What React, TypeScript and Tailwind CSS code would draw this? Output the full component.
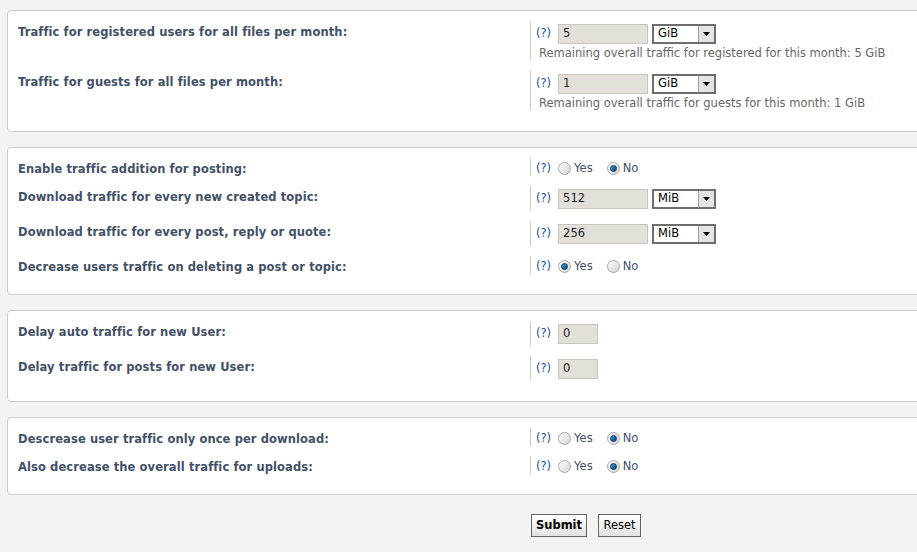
import React from 'react'

const Help = () => <span className="text-[#1b5496] mr-[7px] shrink-0">(?)</span>

const TextBox: React.FC<{ value: string; wide?: boolean }> = ({ value, wide = true }) => (
  <div
    className={`${wide ? 'w-[90px]' : 'w-[40px]'} h-[20px] bg-[#e3e0da] border border-[#c9c6bf] flex items-center pl-[4px] text-[#222]`}
  >
    {value}
  </div>
)

const Select: React.FC<{ value: string }> = ({ value }) => (
  <div className="ml-[4px] w-[64px] h-[20px] border-2 border-[#6e6e6e] bg-white flex items-stretch">
    <span className="flex-1 flex items-center pl-[4px] text-black">{value}</span>
    <span className="w-[16px] bg-[#e4e4e4] border-l border-[#a0a0a0] flex items-center justify-center">
      <svg width="7" height="4" viewBox="0 0 7 4">
        <path d="M0 0h7L3.5 4z" fill="#000" />
      </svg>
    </span>
  </div>
)

const Radio: React.FC<{ checked?: boolean; label: string }> = ({ checked, label }) => (
  <span className="flex items-center mr-[14px]">
    <span className="w-[13px] h-[13px] rounded-full border border-[#a9a9a9] bg-gradient-to-br from-[#ffffff] to-[#d4d4d4] flex items-center justify-center">
      {checked && (
        <span className="w-[7px] h-[7px] rounded-full bg-gradient-to-br from-[#3fa6e6] to-[#0b3f6e] border border-[#0b3357]" />
      )}
    </span>
    <span className="ml-[3px] text-[#425067]">{label}</span>
  </span>
)

const Row: React.FC<{ label: string; children: React.ReactNode }> = ({ label, children }) => (
  <div className="flex py-[5px]">
    <div className="w-[512px] shrink-0 pt-[4px] leading-[14px] font-bold tracking-[0.1px] text-[#425067]">{label}</div>
    <div className="border-l border-[#cccccc] pl-[5px] flex flex-col">{children}</div>
  </div>
)

const InputLine: React.FC<{ children: React.ReactNode }> = ({ children }) => (
  <div className="flex items-center h-[25px] py-[2px]">{children}</div>
)

const Explain: React.FC<{ children: React.ReactNode }> = ({ children }) => (
  <div className="h-[15px] flex items-center ml-[3px] text-[#666666]">{children}</div>
)

const RadioLine: React.FC<{ yes: boolean }> = ({ yes }) => (
  <div className="flex items-center h-[18px] pt-[3px]">
    <Help />
    <Radio checked={yes} label="Yes" />
    <Radio checked={!yes} label="No" />
  </div>
)

const Panel: React.FC<{ children: React.ReactNode }> = ({ children }) => (
  <div className="bg-white border border-[#cccccc] rounded-[4px] pt-[5px] pb-[15px] pl-[10px] mb-[15px]">
    {children}
  </div>
)

export default function App() {
  return (
    <div className="w-full h-[552px] overflow-hidden bg-[#f3f3f3]">
      <div className="w-[1172px] px-[7px] pt-[10px] text-[11.5px] font-['DejaVu_Sans',Verdana,sans-serif]">
        <Panel>
          <Row label="Traffic for registered users for all files per month:">
            <InputLine>
              <Help />
              <TextBox value="5" />
              <Select value="GiB" />
            </InputLine>
            <Explain>Remaining overall traffic for registered for this month: 5 GiB</Explain>
          </Row>
          <Row label="Traffic for guests for all files per month:">
            <InputLine>
              <Help />
              <TextBox value="1" />
              <Select value="GiB" />
            </InputLine>
            <Explain>Remaining overall traffic for guests for this month: 1 GiB</Explain>
          </Row>
        </Panel>

        <Panel>
          <Row label="Enable traffic addition for posting:">
            <RadioLine yes={false} />
          </Row>
          <Row label="Download traffic for every new created topic:">
            <InputLine>
              <Help />
              <TextBox value="512" />
              <Select value="MiB" />
            </InputLine>
          </Row>
          <Row label="Download traffic for every post, reply or quote:">
            <InputLine>
              <Help />
              <TextBox value="256" />
              <Select value="MiB" />
            </InputLine>
          </Row>
          <Row label="Decrease users traffic on deleting a post or topic:">
            <RadioLine yes={true} />
          </Row>
        </Panel>

        <Panel>
          <Row label="Delay auto traffic for new User:">
            <InputLine>
              <Help />
              <TextBox value="0" wide={false} />
            </InputLine>
          </Row>
          <Row label="Delay traffic for posts for new User:">
            <InputLine>
              <Help />
              <TextBox value="0" wide={false} />
            </InputLine>
          </Row>
        </Panel>

        <Panel>
          <Row label="Descrease user traffic only once per download:">
            <RadioLine yes={false} />
          </Row>
          <Row label="Also decrease the overall traffic for uploads:">
            <RadioLine yes={false} />
          </Row>
        </Panel>

        <div className="flex pl-[524px] pt-[4px] gap-[11px]">
          <button className="w-[56px] h-[23px] border border-[#666666] bg-gradient-to-b from-[#ffffff] to-[#e2e2e2] font-bold text-black text-[11.5px]">
            Submit
          </button>
          <button className="w-[43px] h-[23px] border border-[#666666] bg-gradient-to-b from-[#ffffff] to-[#e2e2e2] text-black text-[11.5px]">
            Reset
          </button>
        </div>
      </div>
    </div>
  )
}
